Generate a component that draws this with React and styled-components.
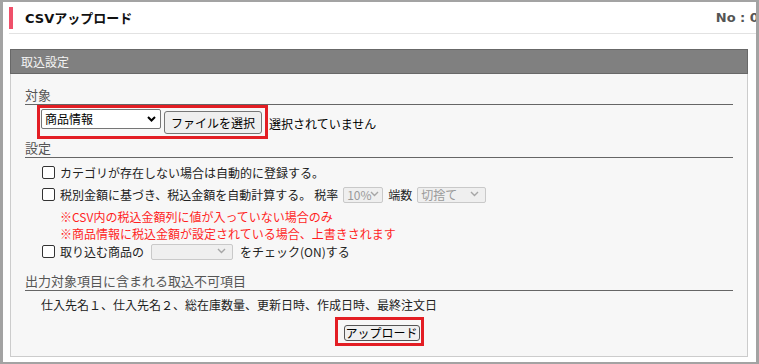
import styled, { createGlobalStyle } from "styled-components";

const GlobalStyle = createGlobalStyle`
  html, body {
    margin: 0;
    padding: 0;
    background: #fff;
  }
`;

const Frame = styled.div`
  box-sizing: border-box;
  height: 364px;
  border-style: solid;
  border-color: #a3a3a3;
  border-width: 2px 3px 2px 3px;
  background: #fff;
  overflow: hidden;
  font-family: "Noto Sans CJK JP", sans-serif;
  font-size: 12px;
  color: #222;
`;

const Header = styled.div`
  display: flex;
  align-items: center;
  height: 31px;
  margin: 0 -30px 0 6px;
  border-bottom: 1px solid #e2e2e2;
`;

const TitleBar = styled.span`
  width: 4px;
  height: 22px;
  background: #ef506a;
  flex-shrink: 0;
`;

const Title = styled.h1`
  flex: 1;
  margin: 0 0 0 12px;
  font-family: "DejaVu Sans", "Noto Sans CJK JP", sans-serif;
  font-size: 13px;
  font-weight: bold;
  color: #111;
`;

const RecordNo = styled.div`
  flex-shrink: 0;
  white-space: nowrap;
  font-family: "DejaVu Sans", sans-serif;
  font-size: 13px;
  font-weight: bold;
  color: #555;
`;

const Panel = styled.section`
  margin: 15px 8px 0 7px;
`;

const PanelHeader = styled.div`
  height: 23px;
  line-height: 23px;
  padding-left: 10px;
  background: #808080;
  border: 1px solid #686868;
  color: #f4f4f4;
  font-size: 12px;
`;

const PanelBody = styled.div`
  background: #f7f7f7;
  border: 1px solid #cccccc;
  border-top: none;
  padding: 12px 14px 10px 14px;
`;

const SectionLabel = styled.div`
  font-size: 13px;
  line-height: 18px;
  color: #555;
  border-bottom: 1px solid #666;
  margin-top: ${(p) => p.$top || 0}px;
`;

const FileRow = styled.div`
  display: flex;
  align-items: center;
  height: 34px;
  padding-left: 12px;
`;

const Highlight = styled.div`
  box-sizing: border-box;
  display: inline-flex;
  align-items: ${(p) => p.$align || "center"};
  gap: ${(p) => p.$gap || 0}px;
  border: 3px solid #e31e24;
  padding: ${(p) => p.$pad};
  height: ${(p) => p.$height}px;
`;

const SelectWrap = styled.div`
  position: relative;
  width: ${(p) => p.$width}px;
  height: ${(p) => p.$height}px;
  flex-shrink: 0;
`;

const Select = styled.select`
  appearance: none;
  box-sizing: border-box;
  width: 100%;
  height: 100%;
  margin: 0;
  padding: 0 0 0 3px;
  border: 1px solid ${(p) => (p.disabled ? "#c9c9c9" : "#767676")};
  border-radius: 2px;
  background: ${(p) => (p.disabled ? "#efefef" : "#fff")};
  color: ${(p) => (p.disabled ? "#9a9a9a" : "#000")};
  font-family: "Noto Sans CJK JP", sans-serif;
  font-size: 12px;
  line-height: 1;
  opacity: 1;
`;

const ChevronSlot = styled.span`
  position: absolute;
  right: ${(p) => p.$right}px;
  top: 50%;
  transform: translateY(-50%);
  display: flex;
  pointer-events: none;
`;

const FileButton = styled.button`
  box-sizing: border-box;
  height: 23px;
  width: 98px;
  margin-top: 2px;
  padding: 0;
  border: 1px solid #767676;
  border-radius: 3px;
  background: #efefef;
  color: #000;
  font-family: "Noto Sans CJK JP", sans-serif;
  font-size: 12px;
`;

const FileStatus = styled.span`
  margin-left: 1px;
  margin-top: 3px;
  font-size: 12px;
  color: #000;
`;

const CheckRow = styled.label`
  display: flex;
  align-items: center;
  gap: 5px;
  height: ${(p) => p.$height || 22}px;
  padding-left: 17px;
  margin-top: ${(p) => p.$top || 0}px;
  color: #222;
  white-space: nowrap;
`;

const Checkbox = styled.input.attrs({ type: "checkbox" })`
  appearance: none;
  box-sizing: border-box;
  width: 13px;
  height: 13px;
  margin: 0;
  border: 1px solid #333;
  border-radius: 2px;
  background: #fff;
  flex-shrink: 0;
`;

const Inline = styled.span`
  margin-left: ${(p) => p.$left || 0}px;
`;

const Notes = styled.div`
  margin-top: 3px;
  padding-left: 35px;
  color: #ff1f1f;
  line-height: 17px;
`;

const Items = styled.div`
  margin-top: 5px;
  padding-left: 16px;
  line-height: 18px;
  color: #222;
`;

const UploadRow = styled.div`
  display: flex;
  justify-content: center;
  margin-top: 3px;
`;

const UploadButton = styled.button`
  box-sizing: border-box;
  width: 76px;
  height: 16px;
  padding: 0;
  border: 1px solid #555;
  border-radius: 3px;
  background: #f0f0f0;
  color: #000;
  font-family: "Noto Sans CJK JP", sans-serif;
  font-size: 12px;
  line-height: 14px;
`;

const Chevron = ({ color = "#000", width = 2 }) => (
  <svg width="9" height="6" viewBox="0 0 9 6">
    <polyline
      points="1,1 4.5,4.5 8,1"
      fill="none"
      stroke={color}
      strokeWidth={width}
    />
  </svg>
);

const Dropdown = ({ width, height, value, disabled, right = 5 }) => (
  <SelectWrap $width={width} $height={height}>
    <Select disabled={disabled} defaultValue={value}>
      <option value={value}>{value}</option>
    </Select>
    <ChevronSlot $right={right}>
      <Chevron color={disabled ? "#a6a6a6" : "#000"} width={disabled ? 1.4 : 2} />
    </ChevronSlot>
  </SelectWrap>
);

export default function App() {
  return (
    <>
      <GlobalStyle />
      <Frame>
        <Header>
          <TitleBar />
          <Title>CSVアップロード</Title>
          <RecordNo>No : 0001</RecordNo>
        </Header>
        <Panel>
          <PanelHeader>取込設定</PanelHeader>
          <PanelBody>
            <SectionLabel>対象</SectionLabel>
            <FileRow>
              <Highlight $height={34} $gap={3} $align="flex-start" $pad="1px 3px 0 1px">
                <Dropdown width={120} height={20} value="商品情報" right={5} />
                <FileButton type="button">ファイルを選択</FileButton>
              </Highlight>
              <FileStatus>選択されていません</FileStatus>
            </FileRow>

            <SectionLabel>設定</SectionLabel>
            <CheckRow $top={3}>
              <Checkbox />
              <span>カテゴリが存在しない場合は自動的に登録する。</span>
            </CheckRow>
            <CheckRow>
              <Checkbox />
              <span>税別金額に基づき、税込金額を自動計算する。</span>
              <Inline $left={-2}>税率</Inline>
              <Dropdown width={40} height={16} value="10%" disabled right={4} />
              <span>端数</span>
              <Dropdown width={69} height={16} value="切捨て" disabled right={7} />
            </CheckRow>
            <Notes>
              <div>※CSV内の税込金額列に値が入っていない場合のみ</div>
              <div>※商品情報に税込金額が設定されている場合、上書きされます</div>
            </Notes>
            <CheckRow $height={18}>
              <Checkbox />
              <span>取り込む商品の</span>
              <Inline $left={2}>
                <Dropdown width={82} height={16} value="" disabled right={7} />
              </Inline>
              <Inline $left={2}>をチェック(ON)する</Inline>
            </CheckRow>

            <SectionLabel $top={12}>出力対象項目に含まれる取込不可項目</SectionLabel>
            <Items>仕入先名１、仕入先名２、総在庫数量、更新日時、作成日時、最終注文日</Items>
            <UploadRow>
              <Highlight $height={29} $pad="5px 1px 2px 6px" $align="flex-start">
                <UploadButton type="button">アップロード</UploadButton>
              </Highlight>
            </UploadRow>
          </PanelBody>
        </Panel>
      </Frame>
    </>
  );
}
